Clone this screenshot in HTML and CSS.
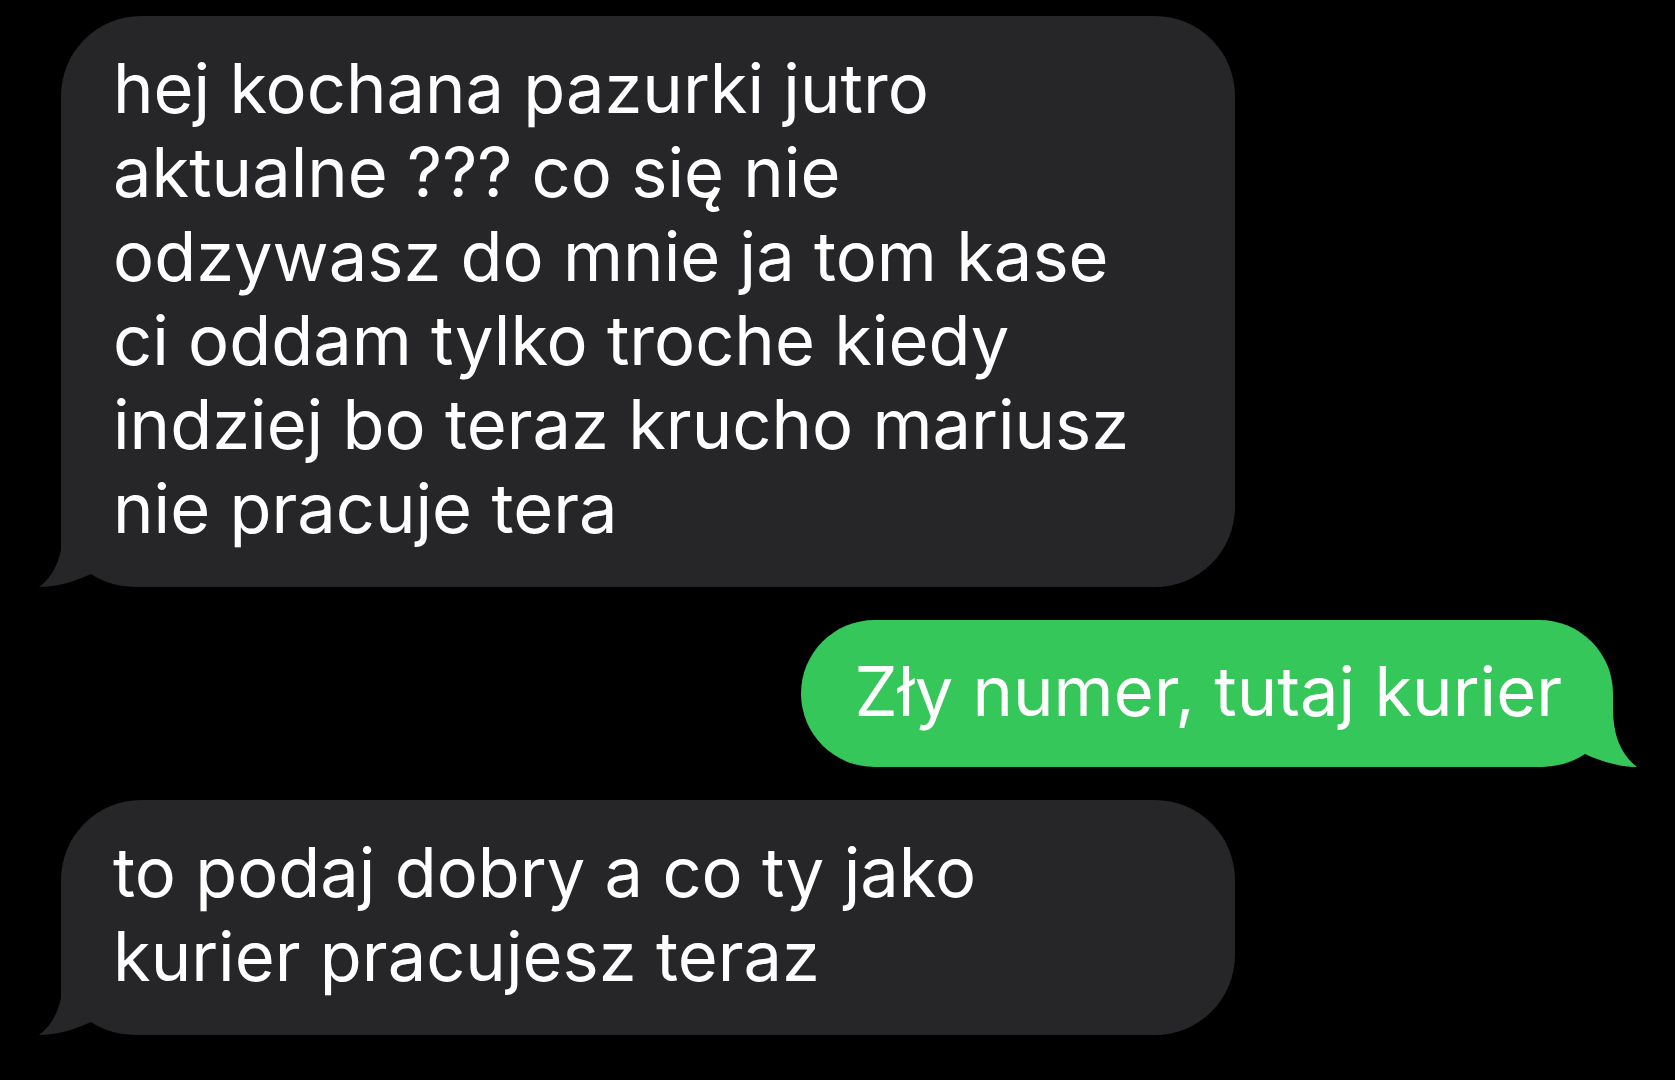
FILE: index.html
```
<!DOCTYPE html>
<html lang="pl">
  <head>
    <meta charset="UTF-8" />
    <meta name="viewport" content="width=device-width, initial-scale=1.0" />
    <title>Wiadomości</title>
    <link rel="stylesheet" href="styles.css">
  </head>
  <body>
    <div class="chat">
      <div class="bubble incoming">
        <svg class="tail tail-left" viewBox="0 0 100 70" width="100" height="70">
          <path d="M24 0 L24 12 C24 38 16 58 0 70 L100 70 L100 0 Z" fill="#262628" />
          <path d="M0 70 C18 70 37 64 52 57 C66 66 80 70 100 70 Z" fill="#000" />
        </svg>
        <p>
          hej kochana pazurki jutro<br />
          aktualne ??? co się nie<br />
          odzywasz do mnie ja tom kase<br />
          ci oddam tylko troche kiedy<br />
          indziej bo teraz krucho mariusz<br />
          nie pracuje tera
        </p>
      </div>

      <div class="bubble outgoing">
        <svg class="tail tail-right" viewBox="0 0 100 70" width="100" height="70">
          <path d="M76 0 L76 12 C76 38 84 58 100 70 L0 70 L0 0 Z" fill="#35c759" />
          <path d="M100 70 C82 70 63 64 48 57 C34 66 20 70 0 70 Z" fill="#000" />
        </svg>
        <p>Zły numer, tutaj kurier</p>
      </div>

      <div class="bubble incoming">
        <svg class="tail tail-left" viewBox="0 0 100 70" width="100" height="70">
          <path d="M24 0 L24 12 C24 38 16 58 0 70 L100 70 L100 0 Z" fill="#262628" />
          <path d="M0 70 C18 70 37 64 52 57 C66 66 80 70 100 70 Z" fill="#000" />
        </svg>
        <p>
          to podaj dobry a co ty jako<br />
          kurier pracujesz teraz
        </p>
      </div>
    </div>
  </body>
</html>
```

FILE: styles.css
```
body {
  margin: 0;
  background-color: #000;
  font-family: Inter, "Noto Sans", sans-serif;
  color: #fff;
}

.chat {
  display: flex;
  flex-direction: column;
  gap: 33px;
  padding: 16px 62px 0 61px;
}

.bubble {
  position: relative;
  box-sizing: border-box;
  border-radius: 80px;
  padding: 31px 52px 36px 52px;
}

.bubble p {
  position: relative;
  margin: 0;
  font-size: 68.6px;
  line-height: 84px;
  white-space: nowrap;
}

.incoming {
  width: 1174px;
  background-color: #262628;
  border-bottom-left-radius: 0;
}

.outgoing {
  align-self: flex-end;
  background-color: #35c759;
  border-bottom-right-radius: 0;
  padding: 30px 51px 33px 54px;
}

/* tail of the bubble */
.tail {
  position: absolute;
  bottom: 0;
  display: block;
}

.tail-left {
  left: -22px;
}

.tail-right {
  right: -24px;
}
```
